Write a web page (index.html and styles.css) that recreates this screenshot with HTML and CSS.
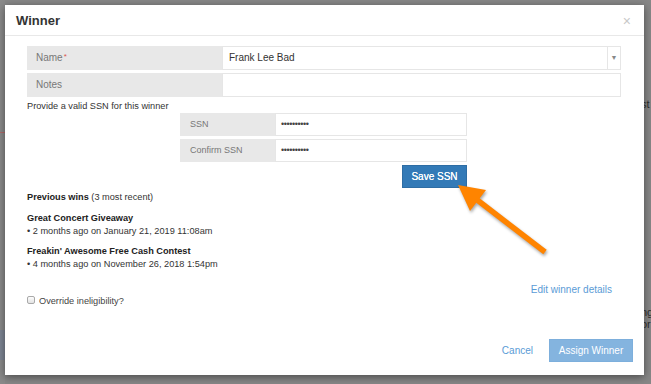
FILE: index.html
```html
<!DOCTYPE html>
<html>
<head>
<meta charset="utf-8">
<link rel="stylesheet" href="styles.css">
</head>
<body>
<div class="page">
  <div class="page-side"></div>
  <div class="page-main">
    <div class="page-text t1">st</div>
    <div class="page-text t2">ng</div>
    <div class="page-text t3">or</div>
  </div>
</div>

<div class="modal">
  <div class="modal-header">
    <h4 class="modal-title">Winner</h4>
    <span class="close">&times;</span>
  </div>
  <div class="modal-body">
    <div class="field">
      <div class="field-label">Name<span class="req">*</span></div>
      <div class="field-input select">
        <span class="value">Frank Lee Bad</span>
        <span class="caret">&#9660;</span>
      </div>
    </div>
    <div class="field">
      <div class="field-label">Notes</div>
      <div class="field-input"></div>
    </div>
    <p class="hint">Provide a valid SSN for this winner</p>
    <div class="ssn-group">
      <div class="field small">
        <div class="field-label">SSN</div>
        <div class="field-input"><span class="dots">&bull;&bull;&bull;&bull;&bull;&bull;&bull;&bull;&bull;&bull;</span></div>
      </div>
      <div class="field small">
        <div class="field-label">Confirm SSN</div>
        <div class="field-input"><span class="dots">&bull;&bull;&bull;&bull;&bull;&bull;&bull;&bull;&bull;&bull;</span></div>
      </div>
      <div class="btn-row">
        <button class="btn btn-primary">Save SSN</button>
      </div>
    </div>
    <p class="prev"><b>Previous wins</b> (3 most recent)</p>
    <div class="win first">
      <div class="win-title">Great Concert Giveaway</div>
      <div class="win-date">&bull; 2 months ago on January 21, 2019 11:08am</div>
    </div>
    <div class="win">
      <div class="win-title">Freakin' Awesome Free Cash Contest</div>
      <div class="win-date">&bull; 4 months ago on November 26, 2018 1:54pm</div>
    </div>
    <div class="edit-row"><a class="link">Edit winner details</a></div>
    <label class="check-row"><span class="checkbox"></span>Override ineligibility?</label>
  </div>
  <div class="modal-footer">
    <a class="link cancel">Cancel</a>
    <button class="btn btn-assign">Assign Winner</button>
  </div>
</div>

<svg class="arrow" width="651" height="384" viewBox="0 0 651 384">
  <line x1="476" y1="199" x2="545" y2="252" stroke="#ff8400" stroke-width="5.5" stroke-linecap="butt"/>
  <polygon points="458,185 470,211 486,190" fill="#ff8400"/>
</svg>
</body>
</html>
```

FILE: styles.css
```css
* { box-sizing: border-box; }
html, body { margin: 0; padding: 0; }
body {
  width: 651px;
  height: 384px;
  overflow: hidden;
  position: relative;
  background: #878787;
  font-family: "Liberation Sans", Arial, sans-serif;
  color: #333;
}

.page {
  display: flex;
  height: 384px;
}
.page-side {
  width: 5px;
  background: linear-gradient(#8a8a8a 0 132px, #b06a6a 132px 133px, #8a8a8a 133px 330px, #7d8594 330px 360px, #8a8a8a 360px);
}
.page-main {
  flex: 1;
  display: flex;
  flex-direction: column;
  align-items: flex-end;
  padding-top: 98px;
}
.page-text {
  font-size: 11px;
  color: #2e2e2e;
  width: 8px;
  overflow: hidden;
  line-height: 12px;
  text-indent: -2px;
}
.t2 { margin-top: 196px; }

.modal {
  position: absolute;
  left: 5px;
  top: 5px;
  width: 639px;
  height: 370px;
  background: #fff;
  box-shadow: 0 2px 8px rgba(0, 0, 0, 0.45);
  display: flex;
  flex-direction: column;
}

.modal-header {
  height: 31px;
  border-bottom: 1px solid #e8e8e8;
  display: flex;
  align-items: center;
  justify-content: space-between;
  padding: 0 13px 0 11px;
}
.modal-title {
  margin: 0;
  font-size: 13px;
  font-weight: bold;
  color: #333;
}
.close {
  font-size: 14px;
  color: #c8c8c8;
  line-height: 14px;
  margin-top: 2px;
}

.modal-body {
  padding: 10px 23px 0 22px;
}

.field {
  display: flex;
  height: 24px;
  margin-bottom: 3px;
}
.field-label {
  width: 195px;
  background: #e8e8e8;
  color: #777;
  font-size: 10px;
  line-height: 24px;
  padding-left: 9px;
}
.req { color: #d9534f; font-size: 8px; vertical-align: top; position: relative; top: -1px; margin-left: 1px; }
.field-input {
  flex: 1;
  border: 1px solid #e6e6e6;
  font-size: 10px;
  line-height: 22px;
  padding-left: 6px;
  color: #333;
  display: flex;
  align-items: center;
}
.select .value { flex: 1; }
.caret {
  width: 13px;
  height: 100%;
  border-left: 1px solid #e6e6e6;
  font-size: 7px;
  color: #888;
  display: flex;
  align-items: center;
  justify-content: center;
}

.hint {
  margin: 0;
  font-size: 9.2px;
  line-height: 12px;
}

.ssn-group {
  margin-left: 153px;
  width: 287px;
  margin-top: 1px;
}
.field.small { height: 23px; }
.field.small .field-label {
  width: 95px;
  font-size: 9px;
  line-height: 23px;
  padding-left: 10px;
}
.field.small .field-input {
  padding-left: 5px;
  line-height: 21px;
}
.dots {
  font-size: 9px;
  letter-spacing: -0.4px;
  color: #444;
}
.btn-row {
  display: flex;
  justify-content: flex-end;
  margin-top: 1px;
}
.btn {
  font-family: "Liberation Sans", Arial, sans-serif;
  font-size: 10px;
  color: #fff;
  border: 1px solid;
  border-radius: 0;
  padding: 0;
  height: 23px;
  margin: 0;
}
.btn-primary {
  width: 65px;
  background: #337ab7;
  border-color: #2e6da4;
  font-size: 10px;
  text-shadow: 0 0 0.2px #fff;
}

.prev {
  margin: 3px 0 0;
  font-size: 9.2px;
  line-height: 12px;
}
.prev b { color: #222; }

.win { margin-top: 7px; font-size: 9.2px; line-height: 13px; }
.win.first { margin-top: 9px; }
.win-title { font-weight: bold; color: #222; }

.edit-row {
  display: flex;
  justify-content: flex-end;
  margin-top: 13px;
  padding-right: 9px;
  line-height: 12px;
}
.link {
  font-size: 10px;
  color: #5a9bd6;
}

.check-row {
  display: flex;
  align-items: center;
  margin-top: -1px;
  font-size: 9.2px;
  line-height: 12px;
  color: #444;
}
.checkbox {
  width: 8px;
  height: 8px;
  border: 1px solid #a9a9a9;
  border-radius: 2px;
  background: linear-gradient(#fdfdfd, #e2e2e2);
  margin: -3px 4px 0 0;
}

.modal-footer {
  margin-top: auto;
  display: flex;
  justify-content: flex-end;
  align-items: center;
  gap: 16px;
  padding: 0 11px 13px 0;
}
.btn-assign {
  width: 84px;
  background: #84b4df;
  border-color: #7dafdc;
}

.arrow {
  position: absolute;
  left: 0;
  top: 0;
  pointer-events: none;
  filter: drop-shadow(1.5px 2px 1.5px rgba(0, 0, 0, 0.35));
}
```
